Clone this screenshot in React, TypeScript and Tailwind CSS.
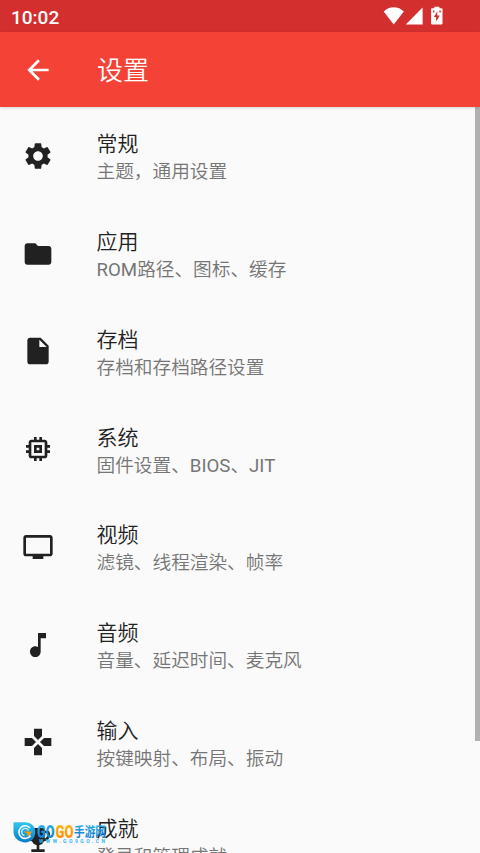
import type { IconType } from "react-icons";
import {
  MdArrowBack,
  MdEmojiEvents,
  MdFolder,
  MdGamepad,
  MdInsertDriveFile,
  MdMemory,
  MdMusicNote,
  MdSettings,
  MdTv,
} from "react-icons/md";

type Setting = {
  icon: IconType;
  title: string;
  summary: string;
};

const settings: Setting[] = [
  { icon: MdSettings, title: "常规", summary: "主题，通用设置" },
  { icon: MdFolder, title: "应用", summary: "ROM路径、图标、缓存" },
  { icon: MdInsertDriveFile, title: "存档", summary: "存档和存档路径设置" },
  { icon: MdMemory, title: "系统", summary: "固件设置、BIOS、JIT" },
  { icon: MdTv, title: "视频", summary: "滤镜、线程渲染、帧率" },
  { icon: MdMusicNote, title: "音频", summary: "音量、延迟时间、麦克风" },
  { icon: MdGamepad, title: "输入", summary: "按键映射、布局、振动" },
  { icon: MdEmojiEvents, title: "成就", summary: "登录和管理成就" },
];

function StatusBar() {
  return (
    <div className="flex h-8 shrink-0 items-center bg-[#d32f2f] pl-[11px] pr-9 text-white">
      <span className="flex-1 pt-0.5 text-[19px] leading-none font-medium">
        10:02
      </span>
      <svg width="61" height="20" viewBox="0 0 61 20" fill="currentColor">
        <path d="M.7 5.6C6-.2 15.5-.2 20.8 5.6L10.7 18.4Z" />
        <path d="M22.8 18.4L39.6 1.6V18.4Z" />
        <path
          fillRule="evenodd"
          d="M51.3 2.3V.7H56.4v1.6h2.3q.8 0 .8.8v14.5q0 .8-.8.8h-9.8q-.8 0-.8-.8V3.1q0-.8.8-.8ZM54.3 5.2L50.9 11h2.2v4.6L56.8 9.4H54.3ZM50 4.4v2h1.4v-2ZM56.4 4.4v2h1.4v-2Z"
        />
      </svg>
    </div>
  );
}

function AppBar() {
  return (
    <header className="z-10 flex h-[75px] shrink-0 items-center bg-[#f44336] pl-[22px] text-white shadow-[0_1px_3px_rgba(0,0,0,0.15)]">
      <MdArrowBack className="size-8" />
      <h1 className="ml-[43px] pt-0.5 text-[26px] leading-none font-[350]">
        设置
      </h1>
    </header>
  );
}

function SettingRow({ icon: Icon, title, summary }: Setting) {
  return (
    <li className="flex h-[97.75px] shrink-0 items-center pl-[21.5px]">
      <Icon className="size-8 text-[#212121]" />
      <div className="ml-[43px] pt-[5px]">
        <div className="text-[21px] leading-7 font-[350] text-[#212121]">
          {title}
        </div>
        <div className="text-[18.67px] leading-7 font-[350] text-[#757575]">
          {/* latin abbreviations keep the regular weight */}
          {summary.split(/([A-Z]+)/).map((part, i) => (
            <span key={i} className={i % 2 ? "font-normal" : undefined}>
              {part}
            </span>
          ))}
        </div>
      </div>
    </li>
  );
}

function Watermark() {
  return (
    <div className="absolute top-[821px] left-[13px] flex h-6 w-[94px] items-start">
      <svg width="23" height="22" viewBox="0 0 23 22" className="shrink-0">
        <defs>
          <linearGradient id="badge" x1="0" y1="0" x2="0" y2="1">
            <stop offset="0" stopColor="#35c5ee" />
            <stop offset="1" stopColor="#087cc8" />
          </linearGradient>
        </defs>
        <path
          fill="url(#badge)"
          d="M.5 1.2H12C18.5 1.2 22.3 5.5 22.3 11.3S18 21.4 12.2 21.4.5 17 .5 11Z"
        />
        <path
          d="M17 7A6.3 6.3 0 1 0 17.5 14.5"
          fill="none"
          stroke="#fff"
          strokeWidth="1.6"
        />
        <path
          d="M15.5 9.5A3.6 3.6 0 1 0 11.5 14.5"
          fill="none"
          stroke="#c9efff"
          strokeWidth="1.4"
        />
        <path d="M10.5 10.5H18.5Q18 14.7 13.5 15L14.5 12.7Z" fill="#ff9d13" />
      </svg>
      <svg
        width="71"
        height="24"
        viewBox="0 0 71 24"
        className="shrink-0 overflow-visible"
      >
        <defs>
          <linearGradient id="blue" x1="0" y1="0" x2="0" y2="1">
            <stop offset="0" stopColor="#2cbcf0" />
            <stop offset="1" stopColor="#086fc5" />
          </linearGradient>
          <linearGradient id="orange" x1="0" y1="0" x2="0" y2="1">
            <stop offset="0" stopColor="#ffc00d" />
            <stop offset="1" stopColor="#ff8400" />
          </linearGradient>
        </defs>
        <g fontFamily="Roboto, sans-serif" fontSize="19" fontWeight="900">
          <text
            x="1"
            y="17"
            textLength="17.5"
            lengthAdjust="spacingAndGlyphs"
            fill="url(#blue)"
          >
            GO
          </text>
          <text
            x="19.5"
            y="17"
            textLength="18"
            lengthAdjust="spacingAndGlyphs"
            fill="url(#orange)"
          >
            GO
          </text>
        </g>
        <text
          x="38"
          y="15"
          fontFamily="'Noto Sans CJK SC', sans-serif"
          fontSize="13"
          fontWeight="700"
          textLength="32"
          lengthAdjust="spacingAndGlyphs"
          fill="url(#blue)"
        >
          手游网
        </text>
        <text
          x="3"
          y="22"
          fontFamily="Roboto, sans-serif"
          fontSize="5"
          fontWeight="700"
          textLength="66"
          fill="#35b7ef"
        >
          WWW.GO9GO.CN
        </text>
      </svg>
    </div>
  );
}

export default function App() {
  return (
    <div className="relative flex h-screen w-full flex-col overflow-hidden bg-[#fafafa] font-[Roboto,'Noto_Sans_CJK_SC',sans-serif]">
      <StatusBar />
      <AppBar />
      <main className="flex min-h-0 flex-1 overflow-hidden">
        <ul className="flex flex-1 flex-col">
          {settings.map((setting) => (
            <SettingRow key={setting.title} {...setting} />
          ))}
        </ul>
        <div className="h-[634px] w-[5px] bg-[#b1b1b1]" />
      </main>
      <Watermark />
    </div>
  );
}
